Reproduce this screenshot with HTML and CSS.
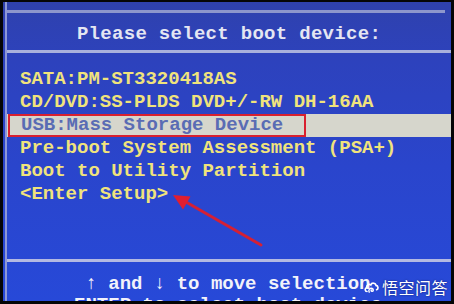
FILE: index.html
```html
<!DOCTYPE html>
<html lang="zh">
<head>
<meta charset="utf-8">
<title>Boot device</title>
<link rel="stylesheet" href="styles.css">
</head>
<body>
<div class="screen">
  <div class="frame">
    <div class="rule rule-top"></div>
    <div class="header">Please select boot device:</div>
    <div class="rule"></div>
    <div class="menu">
      <div class="item">SATA:PM-ST3320418AS</div>
      <div class="item">CD/DVD:SS-PLDS DVD+/-RW DH-16AA</div>
      <div class="item selected"><span class="mark">USB:Mass Storage Device</span></div>
      <div class="item">Pre-boot System Assessment (PSA+)</div>
      <div class="item">Boot to Utility Partition</div>
      <div class="item">&lt;Enter Setup&gt;</div>
    </div>
    <div class="rule rule-bottom"></div>
    <div class="footer">
      <div class="hint">↑ and ↓ to move selection</div>
      <div class="hint hint-cut">ENTER to select boot device</div>
    </div>
  </div>
  <svg class="arrow" width="454" height="304" viewBox="0 0 454 304">
    <line x1="261" y1="245" x2="186" y2="202" stroke="#d42035" stroke-width="3" stroke-linecap="round"/>
    <polygon points="173,195 190.5,196.5 183,209.5" fill="#e01e30"/>
  </svg>
  <div class="watermark">
    <svg class="logo" width="15" height="15" viewBox="0 0 15 15">
      <path d="M3 11.5 C0.8 11.5 0.6 8.4 2.6 7.9 C2.2 5 5.2 3.6 6.8 5 C7.6 2.4 11.6 2.6 12 5.4 C14.4 5.6 14.6 9.2 12.6 9.8" fill="none" stroke="#fff" stroke-width="1.6" stroke-linecap="round"/>
      <path d="M5.2 12.2 C4 10 6 7.6 8.2 8.4 C10 9.2 9.4 11.6 7.8 11.4 C6.8 11.2 6.9 10 7.7 9.9" fill="none" stroke="#fff" stroke-width="1.4" stroke-linecap="round"/>
    </svg>
    <span class="wm-text">悟空问答</span>
  </div>
</div>
</body>
</html>
```

FILE: styles.css
```css
html, body {
  margin: 0;
  padding: 0;
  background: #050506;
  width: 454px;
  height: 304px;
  overflow: hidden;
}

.screen {
  position: relative;
  margin: 2px 3px 0 3px;
  height: 299px;
  overflow: hidden;
  padding-left: 2px;
  background: linear-gradient(180deg, #2f41ad 0%, #2d42bd 20%, #2a45cc 55%, #2749d8 100%);
  font-family: "Liberation Mono", "DejaVu Sans Mono", monospace;
  font-weight: bold;
  font-size: 19px;
}

.frame {
  height: 100%;
  display: flex;
  flex-direction: column;
  border-left: 2px solid #8e98d6;
}

.rule {
  height: 3px;
  background: #a9b1dc;
  flex: none;
}

.rule-top {
  margin-top: 8px;
  background: #8d96cc;
  margin-right: 6px;
}

.header {
  height: 37px;
  padding-top: 5px;
  box-sizing: border-box;
  display: flex;
  align-items: center;
  justify-content: center;
  color: #e4e6f2;
  letter-spacing: 0.3px;
  flex: none;
}

.menu {
  flex: 1;
  padding-top: 15px;
  color: #f0e37c;
}

.item {
  height: 23px;
  line-height: 23px;
  padding-left: 13px;
  white-space: pre;
}

.selected {
  padding-left: 1px;
  background: #d6d6cc;
  display: flex;
  align-items: stretch;
}

.mark {
  border: 2px solid #d8202f;
  box-sizing: border-box;
  width: 298px;
  padding-left: 11px;
  line-height: 19px;
  color: #5a6cb4;
}

.rule-bottom {
  background: #b3b9e2;
}

.footer {
  padding-top: 13px;
  box-sizing: border-box;
  color: #f2f2fa;
  flex: none;
  height: 39px;
}

.hint {
  height: 19px;
  line-height: 19px;
  text-align: center;
  white-space: pre;
  margin-right: 2px;
}

.hint-cut {
  margin-top: 2px;
}

.arrow {
  position: absolute;
  left: -3px;
  top: -2px;
}

.watermark {
  position: absolute;
  right: 3px;
  top: 275px;
  display: flex;
  align-items: center;
  gap: 3px;
  color: #ffffff;
  font-family: "Noto Sans CJK SC", "Noto Sans", sans-serif;
  font-weight: 400;
  font-size: 16px;
  line-height: 20px;
  text-shadow: 0 0 2px rgba(0, 0, 40, 0.6);
}

.logo {
  display: block;
}

.wm-text {
  letter-spacing: 0.5px;
}
```
